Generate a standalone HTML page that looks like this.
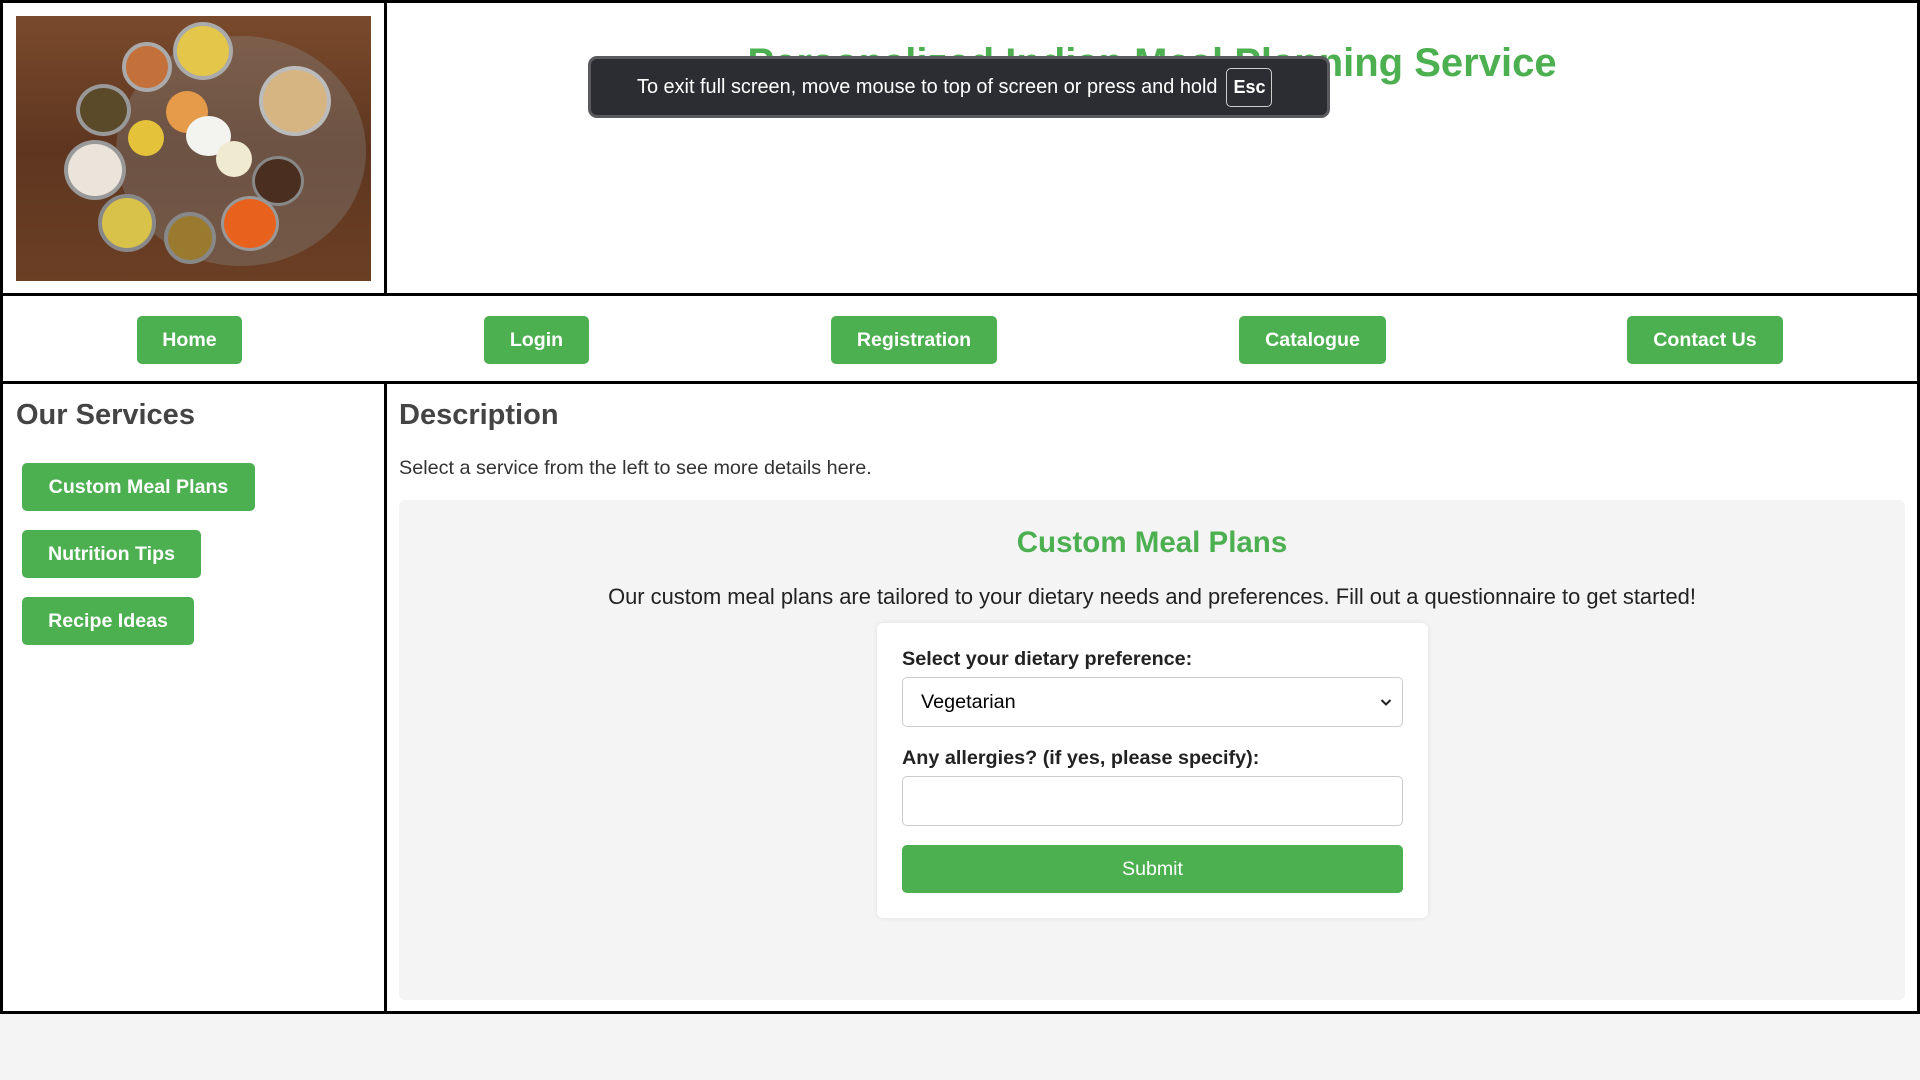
<!DOCTYPE html>
<html><head><meta charset="utf-8"><style>
*{box-sizing:border-box;margin:0;padding:0}
body{width:1920px;height:1080px;background:#f4f4f4;font-family:"Liberation Sans",Arial,sans-serif;position:relative;overflow:hidden;color:#333}
.a{position:absolute}
.frame{left:0;top:0;width:1920px;height:1014px;background:#fff;border:3px solid #000}
.hl{background:#000}
.btn{position:absolute;background:#4CAF50;color:#fff;font-weight:bold;font-size:19.6px;border-radius:5px;display:flex;align-items:center;justify-content:center}
.img{left:16px;top:16px;width:355px;height:265px;background:linear-gradient(180deg,#7a4a2c,#5e3620 50%,#6b3f24);overflow:hidden}
.img div{position:absolute;border-radius:50%}
</style></head><body>
<div class="a frame"></div>
<div class="a hl" style="left:0;top:293px;width:1920px;height:3px"></div>
<div class="a hl" style="left:0;top:381px;width:1920px;height:3px"></div>
<div class="a hl" style="left:384px;top:0;width:3px;height:296px"></div>
<div class="a hl" style="left:384px;top:381px;width:3px;height:633px"></div>

<div class="a img">
<div style="left:100px;top:20px;width:250px;height:230px;background:#8a8a8a;opacity:.35"></div>
<div style="left:157px;top:6px;width:60px;height:58px;background:#e3c64a;border:4px solid #aaa"></div>
<div style="left:106px;top:26px;width:50px;height:50px;background:#c4703a;border:4px solid #aaa"></div>
<div style="left:243px;top:50px;width:72px;height:70px;background:#d7b583;border:4px solid #bbb"></div>
<div style="left:60px;top:68px;width:55px;height:52px;background:#5a4a2a;border:4px solid #999"></div>
<div style="left:150px;top:75px;width:42px;height:42px;background:#e59b4a"></div>
<div style="left:170px;top:100px;width:45px;height:40px;background:#f3f3f0"></div>
<div style="left:48px;top:124px;width:62px;height:60px;background:#eae4da;border:4px solid #999"></div>
<div style="left:112px;top:104px;width:36px;height:36px;background:#e4c23a"></div>
<div style="left:236px;top:140px;width:52px;height:50px;background:#4a2e20;border:3px solid #888"></div>
<div style="left:82px;top:178px;width:58px;height:58px;background:#d9c24a;border:4px solid #888"></div>
<div style="left:148px;top:196px;width:52px;height:52px;background:#9a7a2e;border:4px solid #888"></div>
<div style="left:205px;top:180px;width:58px;height:55px;background:#e8621e;border:3px solid #999"></div>
<div style="left:200px;top:125px;width:36px;height:36px;background:#f0ead0"></div>
</div>

<div class="a" style="left:387px;top:38px;width:1530px;text-align:center;color:#4CAF50;font-weight:bold;font-size:40px;line-height:50px">Personalized Indian Meal Planning Service</div>

<div class="a" style="left:588px;top:56px;width:742px;height:62px;background:#2b2d33;border:3px solid #5a5a5e;border-radius:9px;color:#fff;font-size:19.9px;display:flex;align-items:center;padding-left:46px;white-space:nowrap">To exit full screen, move mouse to top of screen or press and hold<span style="margin-left:9px;border:1.5px solid #ccc;border-radius:5px;padding:8px 6px;font-weight:bold;font-size:18px">Esc</span></div>

<div class="btn" style="left:137px;top:316px;width:105px;height:48px">Home</div>
<div class="btn" style="left:484px;top:316px;width:105px;height:48px">Login</div>
<div class="btn" style="left:831px;top:316px;width:166px;height:48px">Registration</div>
<div class="btn" style="left:1239px;top:316px;width:147px;height:48px">Catalogue</div>
<div class="btn" style="left:1627px;top:316px;width:156px;height:48px">Contact Us</div>

<div class="a" style="left:16px;top:399px;font-size:29px;font-weight:bold;color:#444">Our Services</div>
<div class="btn" style="left:22px;top:463px;width:233px;height:48px">Custom Meal Plans</div>
<div class="btn" style="left:22px;top:530px;width:179px;height:48px">Nutrition Tips</div>
<div class="btn" style="left:22px;top:597px;width:172px;height:48px">Recipe Ideas</div>

<div class="a" style="left:399px;top:399px;font-size:29px;font-weight:bold;color:#444">Description</div>
<div class="a" style="left:399px;top:457px;font-size:19.8px;color:#333">Select a service from the left to see more details here.</div>

<div class="a" style="left:399px;top:500px;width:1506px;height:500px;background:#f4f4f4;border-radius:6px"></div>
<div class="a" style="left:399px;top:526px;width:1506px;text-align:center;color:#4CAF50;font-size:29.5px;font-weight:bold">Custom Meal Plans</div>
<div class="a" style="left:399px;top:584px;width:1506px;text-align:center;font-size:21.9px;color:#222">Our custom meal plans are tailored to your dietary needs and preferences. Fill out a questionnaire to get started!</div>

<div class="a" style="left:877px;top:623px;width:551px;height:295px;background:#fff;border-radius:6px;box-shadow:0 0 6px rgba(0,0,0,.08)"></div>
<div class="a" style="left:902px;top:648px;font-size:19.8px;font-weight:bold;color:#222">Select your dietary preference:</div>
<div class="a" style="left:902px;top:677px;width:501px;height:50px;border:1px solid #ccc;border-radius:5px;font-size:19.8px;color:#000;padding:13px 0 0 18px">Vegetarian
<svg class="a" style="right:10px;top:20px" width="12" height="9" viewBox="0 0 12 9"><path d="M1.5 2l4.5 4.5L10.5 2" fill="none" stroke="#222" stroke-width="2"/></svg></div>
<div class="a" style="left:902px;top:747px;font-size:19.8px;font-weight:bold;color:#222">Any allergies? (if yes, please specify):</div>
<div class="a" style="left:902px;top:776px;width:501px;height:50px;border:1px solid #ccc;border-radius:5px"></div>
<div class="a" style="left:902px;top:845px;width:501px;height:48px;background:#4CAF50;border-radius:5px;color:#fff;font-size:19.6px;display:flex;align-items:center;justify-content:center">Submit</div>
</body></html>
